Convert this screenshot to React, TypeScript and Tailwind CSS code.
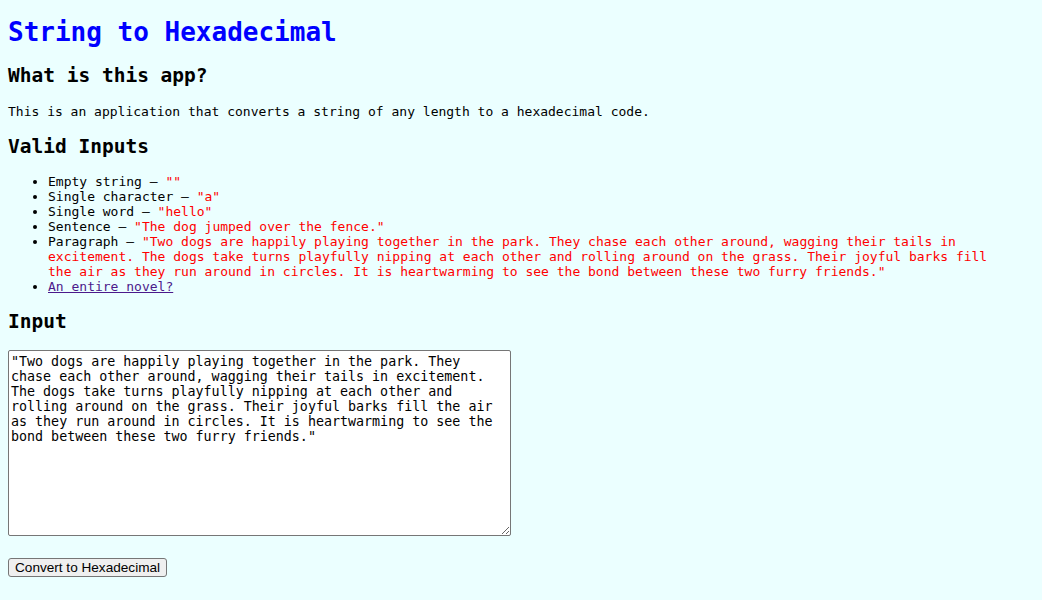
export default function App() {
  const paragraph =
    '"Two dogs are happily playing together in the park. They chase each other around, wagging their tails in excitement. The dogs take turns playfully nipping at each other and rolling around on the grass. Their joyful barks fill the air as they run around in circles. It is heartwarming to see the bond between these two furry friends."';

  const inputs = [
    { label: "Empty string", value: '""' },
    { label: "Single character", value: '"a"' },
    { label: "Single word", value: '"hello"' },
    { label: "Sentence", value: '"The dog jumped over the fence."' },
    { label: "Paragraph", value: paragraph },
  ];

  return (
    <div className="flow-root min-h-screen bg-[#ebffff] px-2 pb-6 font-['DejaVu_Sans_Mono',monospace] text-[13px] leading-[normal] text-black">
      <h1 className="mt-[17px] mb-[17.4px] text-[26px] font-bold text-[#0000ff]">
        String to Hexadecimal
      </h1>

      <h2 className="my-[16.2px] text-[19.5px] font-bold">What is this app?</h2>
      <p className="my-[13px]">
        This is an application that converts a string of any length to a hexadecimal code.
      </p>

      <h2 className="mt-[16px] mb-[16px] text-[19.5px] font-bold">Valid Inputs</h2>
      <ul className="my-[13px] mr-[24px] list-disc pl-10">
        {inputs.map((item) => (
          <li key={item.label}>
            {item.label} – <span className="text-[#ff0000]">{item.value}</span>
          </li>
        ))}
        <li>
          <a href="#" className="text-[#4b1a8b] underline">
            An entire novel?
          </a>
        </li>
      </ul>

      <h2 className="mt-[16.5px] mb-[16.5px] text-[19.5px] font-bold">Input</h2>
      <textarea
        className="block h-[186px] w-[503px] rounded-[2px] border border-[#767676] bg-white px-[2px] pt-[3px] pb-[1px] font-['DejaVu_Sans_Mono',monospace] text-[13.33px] leading-[normal] text-black"
        defaultValue={paragraph}
      />

      <button className="mt-[22px] rounded-[3px] border border-[#767676] bg-[#efefef] px-[6px] py-[1px] font-['Liberation_Sans',Arial,sans-serif] text-[13.6px] leading-[normal] text-black">
        Convert to Hexadecimal
      </button>
    </div>
  );
}
